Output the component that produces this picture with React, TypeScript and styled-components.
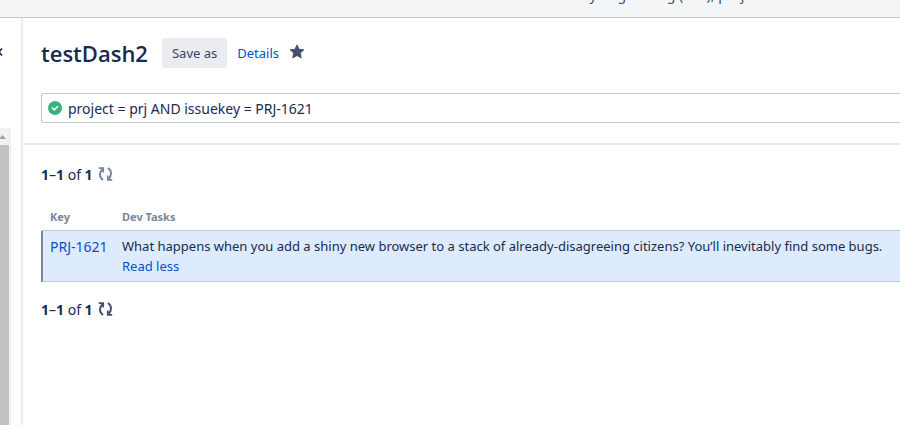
import React from "react";
import styled, { createGlobalStyle } from "styled-components";

const color = {
  text: "#172b4d",
  link: "#0052cc",
  muted: "#7a869a",
  icon: "#42526e",
  line: "#c1c7d0",
  divider: "#ebecf0",
  band: "#f4f5f7",
  selected: "#deebff",
};

const GlobalStyle = createGlobalStyle`
  * { box-sizing: border-box; }
  body {
    margin: 0;
    overflow: hidden;
    background: #fff;
    color: ${color.text};
    font-family: "Noto Sans", "Open Sans", sans-serif;
    font-size: 13px;
    line-height: 20px;
  }
`;

const Page = styled.div`
  display: flex;
  flex-direction: column;
  min-height: 100vh;
`;

const Banner = styled.header`
  display: flex;
  align-items: flex-end;
  justify-content: flex-end;
  height: 18px;
  overflow: hidden;
  padding: 0 136px 16px 0;
  background: ${color.band};
  border-bottom: 1px solid ${color.line};
  color: ${color.icon};
  font-size: 14px;
  line-height: 12px;
  white-space: nowrap;
`;

const Body = styled.div`
  display: flex;
  flex: 1;
`;

const Sidebar = styled.aside`
  display: flex;
  flex: none;
  flex-direction: column;
  justify-content: space-between;
  width: 23px;
  border-right: 2px solid ${color.divider};
`;

const CollapseButton = styled.button`
  display: flex;
  width: 4px;
  height: 8px;
  margin-top: 30px;
  padding: 0;
  border: 0;
  background: none;
  color: ${color.text};
`;

const ScrollTrack = styled.div`
  display: flex;
  flex: 1;
  flex-direction: column;
  width: 11px;
  margin-top: 72px;
  background: #f1f1f1;
`;

const ScrollArrow = styled.svg`
  flex: none;
  width: 7px;
  height: 17px;
`;

const ScrollThumb = styled.div`
  flex: 1;
  width: 9px;
  background: #c1c1c1;
`;

const Main = styled.main`
  flex: 1;
  min-width: 0;
`;

const SearchPanel = styled.section`
  padding: 20px 0 20px 18px;
  border-bottom: 2px solid ${color.divider};
`;

const TitleBar = styled.div`
  display: flex;
  align-items: center;
  height: 30px;
`;

const Title = styled.h1`
  margin: 0 14px 0 0;
  font-family: "Open Sans", "Noto Sans", sans-serif;
  font-size: 22px;
  font-weight: 600;
  line-height: 30px;
`;

const SaveButton = styled.button`
  height: 30px;
  margin-right: 10px;
  padding: 0 10px;
  border: 0;
  border-radius: 3px;
  background: ${color.divider};
  color: #344563;
  font: inherit;
`;

const Link = styled.a`
  color: ${color.link};
  text-decoration: none;
`;

const StarButton = styled.button`
  display: flex;
  margin: 0 0 4px 10px;
  padding: 0;
  border: 0;
  background: none;
`;

const QueryField = styled.label`
  display: flex;
  align-items: center;
  gap: 6px;
  height: 30px;
  margin-top: 25px;
  padding-left: 6px;
  border: 1px solid ${color.line};
  border-right: 0;
  border-radius: 3px 0 0 3px;
`;

const QueryInput = styled.input`
  flex: 1;
  min-width: 0;
  height: 28px;
  padding: 0;
  border: 0;
  outline: 0;
  background: none;
  color: ${color.text};
  font: inherit;
  font-size: 14px;
`;

const Results = styled.section`
  padding: 20px 0 0 18px;
`;

const Pager = styled.div`
  display: flex;
  align-items: center;
  gap: 5px;
  height: 20px;
  font-size: 14px;
`;

const RefreshButton = styled.button<{ $tone: string }>`
  display: flex;
  margin-bottom: 2px;
  padding: 0;
  border: 0;
  background: none;
  color: ${(p) => p.$tone};
`;

const IssueTable = styled.table`
  width: 100%;
  margin: 20px 0 18px;
  border-collapse: separate;
  border-spacing: 0;
`;

const HeadCell = styled.th`
  height: 26px;
  padding: 2px 0 3px 9px;
  border-bottom: 1px solid ${color.line};
  color: ${color.muted};
  font-size: 11px;
  font-weight: 700;
  text-align: left;
`;

const KeyHead = styled(HeadCell)`
  width: 72px;
`;

const Cell = styled.td`
  padding: 5px 0 5px 9px;
  border-bottom: 1px solid ${color.line};
  background: ${color.selected};
  vertical-align: top;
  white-space: nowrap;
`;

const KeyCell = styled(Cell)`
  padding-top: 6px;
  padding-left: 7px;
  border-left: 2px solid ${color.muted};
  font-size: 14px;
`;

const BlockLink = styled(Link)`
  display: block;
`;

function Range({ tone }: { tone: string }) {
  return (
    <Pager>
      <span>
        <b>1</b>–<b>1</b> of <b>1</b>
      </span>
      <RefreshButton type="button" aria-label="Refresh results" $tone={tone}>
        <svg width="15" height="14" viewBox="0 0 15 14" fill="none" stroke="currentColor" strokeWidth="2">
          <path d="M5 13 C1 10 1 5.500 4.600 2" />
          <path d="M0.800 1.200 H5.200 V5.600" strokeWidth="1.8" />
          <path d="M10 1 C14 4 14 8.500 10.400 12" />
          <path d="M14.200 12.800 H9.800 V8.400" strokeWidth="1.8" />
        </svg>
      </RefreshButton>
    </Pager>
  );
}

export default function App() {
  return (
    <Page>
      <GlobalStyle />
      <Banner>by bug testing (dev), project</Banner>
      <Body>
        <Sidebar>
          <CollapseButton type="button" aria-label="Collapse filters">
            <svg width="4" height="8" viewBox="0 0 4 8" fill="none" stroke="currentColor" strokeWidth="1.6">
              <path d="M2 0.500 L-1 4 L2 7.500" />
            </svg>
          </CollapseButton>
          <ScrollTrack>
            <ScrollArrow viewBox="0 0 7 17">
              <path d="M-1 11 L2.500 7 L6 11 Z" fill="#a3a3a3" />
            </ScrollArrow>
            <ScrollThumb />
          </ScrollTrack>
        </Sidebar>
        <Main>
          <SearchPanel>
            <TitleBar>
              <Title>testDash2</Title>
              <SaveButton type="button">Save as</SaveButton>
              <Link href="#details">Details</Link>
              <StarButton type="button" aria-label="Favourite">
                <svg width="16" height="15" viewBox="0 0 16 15" fill={color.icon} stroke={color.icon} strokeLinejoin="round">
                  <path d="M8 1 L10 5.300 L14.800 5.800 L11.300 9 L12.200 13.800 L8 11.500 L3.800 13.800 L4.700 9 L1.200 5.800 L6 5.300 Z" />
                </svg>
              </StarButton>
            </TitleBar>
            <QueryField>
              <svg width="14" height="14" viewBox="0 0 14 14">
                <circle cx="7" cy="7" r="7" fill="#36b37e" />
                <path d="M4.300 7 L6.300 8.900 L9.700 5.500" fill="none" stroke="#fff" strokeWidth="1.5" strokeLinecap="round" />
              </svg>
              <QueryInput aria-label="Query" defaultValue="project = prj AND issuekey = PRJ-1621" />
            </QueryField>
          </SearchPanel>
          <Results>
            <Range tone={color.muted} />
            <IssueTable>
              <thead>
                <tr>
                  <KeyHead>Key</KeyHead>
                  <HeadCell>Dev Tasks</HeadCell>
                </tr>
              </thead>
              <tbody>
                <tr>
                  <KeyCell>
                    <Link href="#PRJ-1621">PRJ-1621</Link>
                  </KeyCell>
                  <Cell>
                    What happens when you add a shiny new browser to a stack of already-disagreeing citizens? You’ll
                    inevitably find some bugs.
                    <BlockLink href="#less">Read less</BlockLink>
                  </Cell>
                </tr>
              </tbody>
            </IssueTable>
            <Range tone={color.icon} />
          </Results>
        </Main>
      </Body>
    </Page>
  );
}
